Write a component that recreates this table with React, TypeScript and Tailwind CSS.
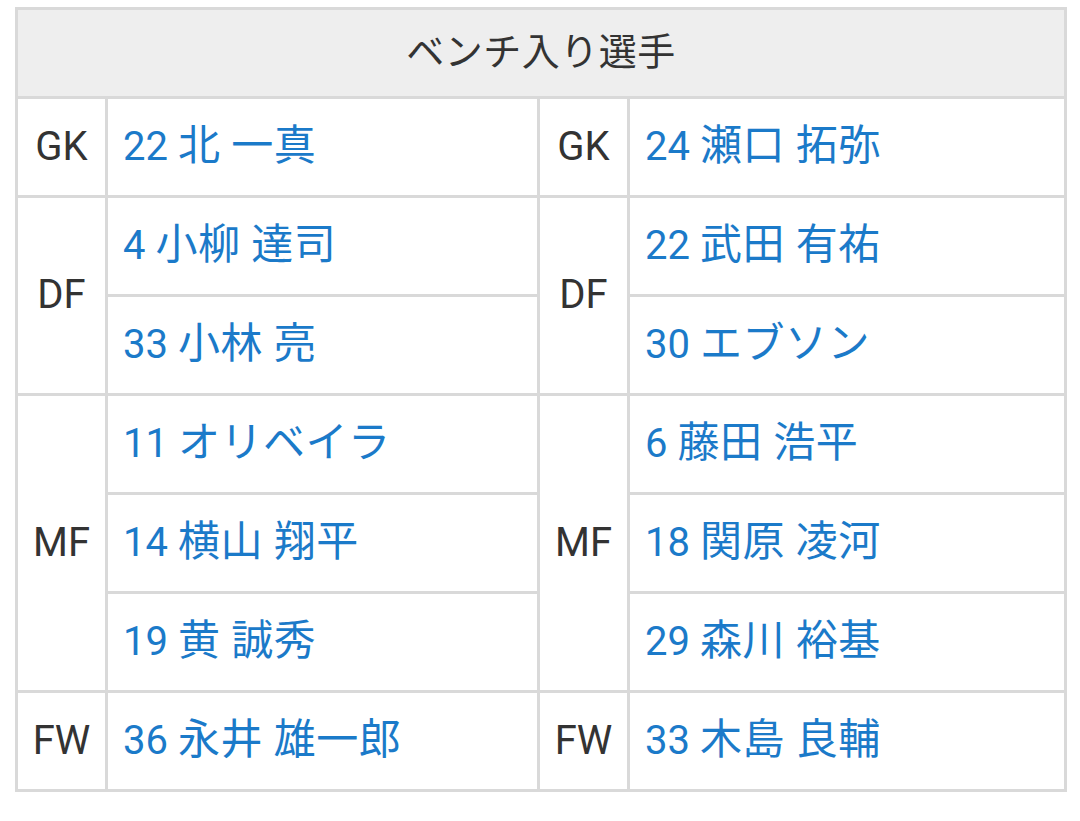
type Player = { no: string; name: string }
type Group = { pos: string; players: Player[] }

const left: Group[] = [
  { pos: 'GK', players: [{ no: '22', name: '北 一真' }] },
  {
    pos: 'DF',
    players: [
      { no: '4', name: '小柳 達司' },
      { no: '33', name: '小林 亮' },
    ],
  },
  {
    pos: 'MF',
    players: [
      { no: '11', name: 'オリベイラ' },
      { no: '14', name: '横山 翔平' },
      { no: '19', name: '黄 誠秀' },
    ],
  },
  { pos: 'FW', players: [{ no: '36', name: '永井 雄一郎' }] },
]

const right: Group[] = [
  { pos: 'GK', players: [{ no: '24', name: '瀬口 拓弥' }] },
  {
    pos: 'DF',
    players: [
      { no: '22', name: '武田 有祐' },
      { no: '30', name: 'エブソン' },
    ],
  },
  {
    pos: 'MF',
    players: [
      { no: '6', name: '藤田 浩平' },
      { no: '18', name: '関原 凌河' },
      { no: '29', name: '森川 裕基' },
    ],
  },
  { pos: 'FW', players: [{ no: '33', name: '木島 良輔' }] },
]

const cell = 'border-[3px] border-[#d9d9d9]'

function Name({ p }: { p: Player }) {
  return (
    <td className={`${cell} pl-[15px] pb-[2px] text-[#1b7ac9]`}>
      {p.no} <span className="text-[42px] tracking-[0.5px]">{p.name}</span>
    </td>
  )
}

function Rows() {
  const rows: React.ReactNode[] = []
  left.forEach((g, gi) => {
    const r = right[gi]
    g.players.forEach((p, pi) => {
      rows.push(
        <tr key={`${gi}-${pi}`} className="h-[99px]">
          {pi === 0 && (
            <td rowSpan={g.players.length} className={`${cell} pb-[1px] text-center text-[#333333]`}>
              {g.pos}
            </td>
          )}
          <Name p={p} />
          {pi === 0 && (
            <td rowSpan={r.players.length} className={`${cell} pb-[1px] text-center text-[#333333]`}>
              {r.pos}
            </td>
          )}
          <Name p={r.players[pi]} />
        </tr>,
      )
    })
  })
  return <>{rows}</>
}

export default function App() {
  return (
    <div className="min-h-[821px] w-[1080px] bg-white pt-[7px] pl-[15px] font-['Roboto','Noto_Sans_CJK_JP',sans-serif]">
      <table className="w-[1049px] table-fixed border-collapse border-[3px] border-[#d9d9d9] text-[40px] leading-none">
        <colgroup>
          <col className="w-[90px]" />
          <col className="w-[432px]" />
          <col className="w-[90px]" />
          <col className="w-[437px]" />
        </colgroup>
        <thead>
          <tr className="h-[89px]">
            <th
              colSpan={4}
              className={`${cell} bg-[#eeeeee] pb-[3px] text-center text-[38px] font-normal tracking-[0.5px] text-[#333333]`}>
              ベンチ入り選手
            </th>
          </tr>
        </thead>
        <tbody>
          <Rows />
        </tbody>
      </table>
    </div>
  )
}
